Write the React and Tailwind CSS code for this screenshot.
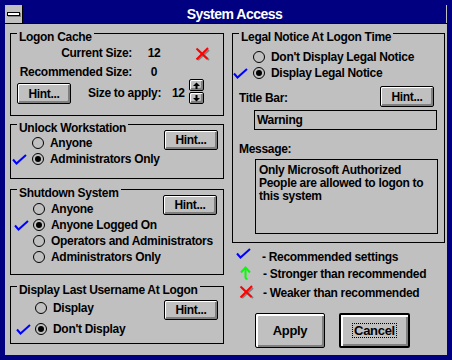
import React from "react";

const Check = () => (
  <svg width="15" height="11" viewBox="0 0 15 11">
    <path d="M1 5.5 L4.5 9.5 L14 1" stroke="#0000ff" strokeWidth="2" fill="none" />
  </svg>
);

const Arrow = () => (
  <svg width="11" height="14" viewBox="0 0 11 14">
    <path d="M5.5 2.5 V11 Q5.5 13 7.5 13" stroke="#00ff00" strokeWidth="2" fill="none" />
    <path d="M1 6.5 L5.5 1.5 L10 6.5" stroke="#00ff00" strokeWidth="2" fill="none" />
  </svg>
);

const XMark = () => (
  <svg width="15" height="14" viewBox="0 0 15 14">
    <path d="M3 3 L14 13 M14 3 L3 13" stroke="#808080" strokeWidth="2" fill="none" />
    <path d="M1.5 1.5 L12.5 12 M13 1 L1.5 12.5" stroke="#ff0000" strokeWidth="2" fill="none" />
  </svg>
);

const Btn = ({ children, className }) => (
  <div
    className={
      "flex shrink-0 items-center justify-center rounded-[2px] border border-black bg-[#c0c0c0] shadow-[inset_1px_1px_0_#ffffff,inset_-2px_-2px_0_#808080] " +
      className
    }
  >
    {children}
  </div>
);

const Label = ({ children }) => (
  <div className="-mt-[4px] ml-[6px] w-fit bg-[#c0c0c0] px-[2px] leading-[14px] whitespace-nowrap">
    {children}
  </div>
);

const Radio = ({ checked, ok, slot, label, className }) => (
  <div className={"flex h-[16px] items-center " + (className || "")}>
    <div className={"flex h-[16px] shrink-0 items-center " + slot}>{ok ? <Check /> : null}</div>
    <div className="flex h-[12px] w-[12px] shrink-0 items-center justify-center rounded-full border border-black">
      {checked ? <div className="h-[6px] w-[6px] rounded-full bg-black" /> : null}
    </div>
    <div className="ml-[6px] leading-[14px] whitespace-nowrap">{label}</div>
  </div>
);

export default function App() {
  return (
    <div className="flex h-[360px] w-[452px] flex-col bg-[#000080] p-[5px] font-['Liberation_Sans',Arial,sans-serif] text-[12px] font-bold tracking-[-0.3px] text-black">
      {/* title bar */}
      <div className="flex h-[18px] shrink-0">
        <div className="flex w-[17px] items-center justify-center bg-[#c0c0c0]">
          <div className="h-[4px] w-[13px] border border-black bg-white shadow-[1px_1px_0_#808080]" />
        </div>
        <div className="w-px bg-black" />
        <div className="flex flex-1 items-center justify-center border-r border-[#c0c0c0] text-[14px] leading-[18px] tracking-[-0.5px] text-white">
          System Access
        </div>
      </div>
      <div className="h-px shrink-0 bg-black" />

      {/* content */}
      <div className="flex flex-1 bg-[#c0c0c0] pl-[5px]">
        {/* left column */}
        <div className="mt-[9px] flex w-[214px] shrink-0 flex-col">
          {/* Logon Cache */}
          <div className="flex h-[83px] flex-col border border-black">
            <Label>Logon Cache</Label>
            <div className="mt-[2px] flex h-[14px] leading-[14px]">
              <div className="w-[121px] text-right">Current Size:</div>
              <div className="w-[44px] text-center">12</div>
              <div className="ml-[19px] mt-[1px]">
                <XMark />
              </div>
            </div>
            <div className="mt-[5px] flex h-[14px] leading-[14px]">
              <div className="w-[121px] text-right">Recommended Size:</div>
              <div className="w-[44px] text-center">0</div>
            </div>
            <div className="flex h-[26px] items-start pl-[6px]">
              <Btn className="mt-[4px] h-[21px] w-[54px]">Hint...</Btn>
              <div className="ml-[17px] mt-[7px] w-[84px] leading-[14px] whitespace-nowrap">Size to apply:</div>
              <div className="mt-[7px] w-[17px] leading-[14px]">12</div>
              <div className="flex flex-col gap-[1px]">
                <Btn className="h-[12px] w-[15px]">
                  <svg width="7" height="7" viewBox="0 0 7 7">
                    <path d="M3.5 0.5 L7 4 H0 Z" fill="#000" />
                    <rect x="2.5" y="4" width="2" height="3" fill="#000" />
                  </svg>
                </Btn>
                <Btn className="h-[12px] w-[15px]">
                  <svg width="7" height="7" viewBox="0 0 7 7">
                    <rect x="2.5" y="0" width="2" height="3" fill="#000" />
                    <path d="M0 3 H7 L3.5 6.5 Z" fill="#000" />
                  </svg>
                </Btn>
              </div>
            </div>
          </div>

          {/* Unlock Workstation */}
          <div className="mt-[8px] flex h-[55px] border border-black">
            <div className="flex min-w-0 flex-1 flex-col">
              <Label>Unlock Workstation</Label>
              <Radio slot="w-[21px] pl-[1px]" label="Anyone" />
              <Radio slot="w-[21px] pl-[1px]" checked ok label="Administrators Only" />
            </div>
            <Btn className="mr-[5px] mt-[5px] h-[20px] w-[54px]">Hint...</Btn>
          </div>

          {/* Shutdown System */}
          <div className="mt-[10px] flex h-[86px] border border-black">
            <div className="flex min-w-0 flex-1 flex-col">
              <Label>Shutdown System</Label>
              <div className="mt-[1px]" />
              <Radio slot="w-[22px] pl-[3px]" label="Anyone" />
              <Radio slot="w-[22px] pl-[3px]" checked ok label="Anyone Logged On" />
              <Radio slot="w-[22px] pl-[3px]" label="Operators and Administrators" />
              <Radio slot="w-[22px] pl-[3px]" label="Administrators Only" />
            </div>
            <Btn className="mr-[6px] mt-[5px] h-[20px] w-[54px]">Hint...</Btn>
          </div>

          {/* Display Last Username */}
          <div className="mt-[11px] flex h-[58px] border border-black">
            <div className="flex min-w-0 flex-1 flex-col">
              <Label>Display Last Username At Logon</Label>
              <Radio className="mt-[3px]" slot="w-[24px] pl-[5px]" label="Display" />
              <Radio className="mt-[5px]" slot="w-[24px] pl-[5px]" checked ok label="Don't Display" />
            </div>
            <Btn className="mr-[5px] mt-[13px] h-[20px] w-[54px]">Hint...</Btn>
          </div>
        </div>

        {/* right column */}
        <div className="ml-[8px] mt-[9px] flex w-[213px] shrink-0 flex-col">
          <div className="flex h-[210px] flex-col border border-black">
            <Label>Legal Notice At Logon Time</Label>
            <Radio className="mt-[5px]" slot="w-[20px]" label="Don't Display Legal Notice" />
            <Radio slot="w-[20px]" checked ok label="Display Legal Notice" />
            <div className="mt-[5px] flex h-[21px] items-start">
              <div className="ml-[6px] mt-[5px] leading-[14px]">Title Bar:</div>
              <Btn className="ml-auto mr-[10px] h-[21px] w-[54px]">Hint...</Btn>
            </div>
            <div className="ml-[21px] mr-[7px] mt-[3px] h-[20px] border border-black px-[2px] leading-[18px]">
              Warning
            </div>
            <div className="ml-[6px] mt-[12px] leading-[14px]">Message:</div>
            <div className="ml-[22px] mr-[6px] mt-[3px] h-[75px] border border-black pl-[3px] pt-[4px] leading-[13px]">
              Only Microsoft Authorized
              <br />
              People are allowed to logon to
              <br />
              this system
            </div>
          </div>

          {/* legend */}
          <div className="mt-[7px] flex h-[14px] items-start leading-[14px]">
            <div className="-mt-[2px] w-[30px] pl-[4px]">
              <Check />
            </div>
            <div>- Recommended settings</div>
          </div>
          <div className="mt-[3px] flex h-[14px] items-start leading-[14px]">
            <div className="-mt-[1px] w-[31px] pl-[8px]">
              <Arrow />
            </div>
            <div>- Stronger than recommended</div>
          </div>
          <div className="mt-[5px] flex h-[14px] items-start leading-[14px]">
            <div className="-mt-[1px] w-[31px] pl-[7px]">
              <XMark />
            </div>
            <div>- Weaker than recommended</div>
          </div>

          {/* buttons */}
          <div className="mt-[13px] flex">
            <Btn className="ml-[23px] h-[35px] w-[70px] text-[13px] shadow-[inset_2px_2px_0_#ffffff,inset_-2px_-2px_0_#808080]">
              Apply
            </Btn>
            <div className="ml-[14px] flex h-[35px] w-[71px] shrink-0 items-center justify-center rounded-[2px] border-2 border-black bg-[#c0c0c0] text-[13px] shadow-[inset_2px_2px_0_#ffffff,inset_-2px_-2px_0_#808080]">
              <div className="border border-dotted border-black px-[1px] leading-[13px]">Cancel</div>
            </div>
          </div>
        </div>
      </div>
    </div>
  );
}
